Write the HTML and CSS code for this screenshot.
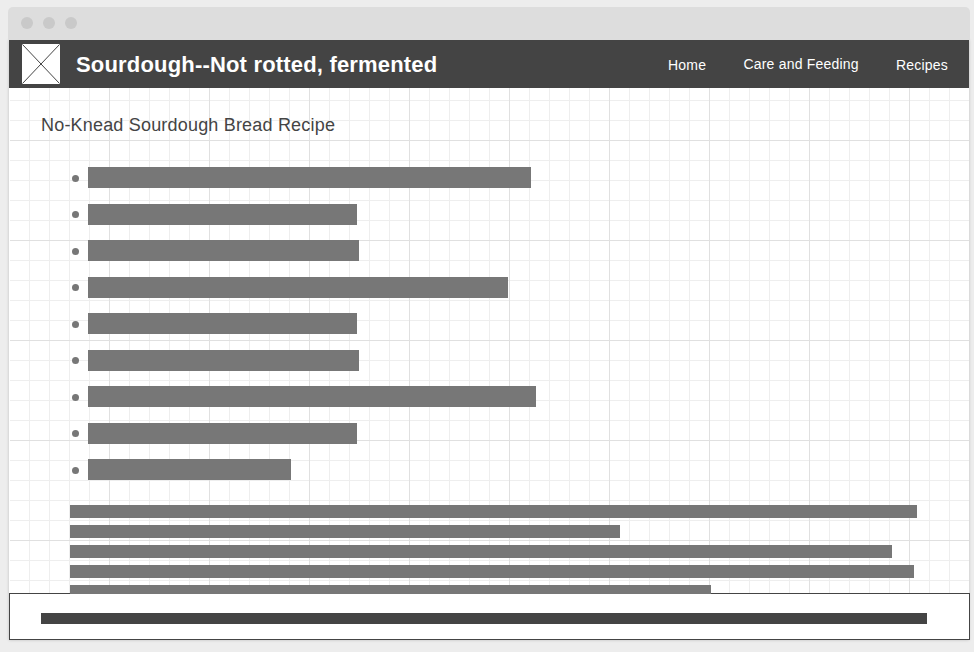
FILE: index.html
```html
<!DOCTYPE html>
<html lang="en">
<head>
<meta charset="utf-8">
<title>Sourdough</title>
<link rel="stylesheet" href="styles.css">
</head>
<body>
<div class="window">
  <div class="titlebar"><i class="dot"></i><i class="dot"></i><i class="dot"></i></div>
  <div class="page">
    <header class="header">
      <svg class="logo" width="38" height="40" viewBox="0 0 38 40"><rect width="38" height="40" rx="0.5" fill="#fff"/><path d="M0.5 0.5L37.5 39.5M37.5 0.5L0.5 39.5" stroke="#444" stroke-width="1"/></svg>
      <h1 class="brand">Sourdough--Not rotted, fermented</h1>
      <nav class="nav">
        <a class="link">Home</a>
        <a class="link link-raised">Care and Feeding</a>
        <a class="link">Recipes</a>
      </nav>
    </header>
    <main class="content">
      <h2 class="title">No-Knead Sourdough Bread Recipe</h2>
      <ul class="list">
        <li class="item"><span class="bar" style="width:443px"></span></li>
        <li class="item"><span class="bar" style="width:269px"></span></li>
        <li class="item"><span class="bar" style="width:271px"></span></li>
        <li class="item"><span class="bar" style="width:420px"></span></li>
        <li class="item"><span class="bar" style="width:269px"></span></li>
        <li class="item"><span class="bar" style="width:271px"></span></li>
        <li class="item"><span class="bar" style="width:448px"></span></li>
        <li class="item"><span class="bar" style="width:269px"></span></li>
        <li class="item"><span class="bar" style="width:203px"></span></li>
      </ul>
      <div class="paragraph">
        <div class="line" style="width:847px"></div>
        <div class="line" style="width:550px"></div>
        <div class="line" style="width:822px"></div>
        <div class="line" style="width:844px"></div>
        <div class="line" style="width:641px"></div>
      </div>
    </main>
    <footer class="footer"><div class="footer-text"></div></footer>
  </div>
</div>
</body>
</html>
```
FILE: styles.css
```css
* { box-sizing: border-box; }

body {
  margin: 0;
  height: 652px;
  padding: 7px 4px 12px 8px;
  overflow: hidden;
  background: #ededed;
  font-family: "Liberation Sans", Arial, sans-serif;
}

.window {
  width: 962px;
  height: 633px;
}

.titlebar {
  position: relative;
  z-index: 1;
  display: flex;
  gap: 10px;
  height: 33px;
  padding: 10px 13px;
  border-radius: 5px 5px 0 0;
  background: #ddd;
}

.dot {
  width: 12px;
  height: 12px;
  border-radius: 50%;
  background: #c9c9c9;
}

.page {
  width: 960px;
  height: 600px;
  margin-left: 1px;
  background: #fff;
  box-shadow: 0 0 3px rgba(0, 0, 0, 0.2);
}

.header {
  display: flex;
  align-items: center;
  height: 48px;
  padding: 0 21px 0 13px;
  background: #444;
  color: #fff;
}

.logo { display: block; }

.brand {
  margin: 1px 0 0 16px;
  font-size: 22px;
  line-height: 26px;
  letter-spacing: 0.18px;
  white-space: nowrap;
}

.nav {
  display: flex;
  gap: 37.3px;
  margin: 2px 0 0 auto;
  font-size: 14px;
  line-height: 16px;
  letter-spacing: 0.2px;
  white-space: nowrap;
}

.link-raised { margin-top: -1px; }

.content {
  position: relative;
  z-index: 1;
  height: 506px;
  margin-left: 1px;
  padding: 26px 0 0 31px;
  overflow: hidden;
}

/* Graph-paper grid: minor lines every 20px, major lines every 100px */
.content::before {
  content: "";
  position: absolute;
  inset: 0 -1px 1px 0;
  z-index: -1;
  background:
    linear-gradient(#e0e0e0 1px, transparent 1px) 0 52px / 100px 100px,
    linear-gradient(90deg, #e0e0e0 1px, transparent 1px) 99px 0 / 100px 100px,
    linear-gradient(#eee 1px, transparent 1px) 0 12px / 20px 20px,
    linear-gradient(90deg, #eee 1px, transparent 1px) 19px 0 / 20px 20px;
}

.title {
  margin: 0;
  height: 53px;
  color: #444;
  font-size: 18px;
  line-height: 22px;
  font-weight: 400;
  letter-spacing: 0.19px;
}

.list {
  margin: 0 0 0 31px;
  padding: 0;
  height: 338px;
  list-style: none;
}

.item {
  display: flex;
  gap: 9px;
  height: 36.5px;
}

.item::before {
  content: "";
  width: 7px;
  height: 7px;
  margin-top: 7.9px;
  border-radius: 50%;
  background: #777;
}

.bar {
  height: 21px;
  background: #777;
}

.paragraph {
  display: flex;
  flex-direction: column;
  gap: 7px;
  margin-left: 29px;
}

.line {
  flex: none;
  height: 13px;
  background: #777;
}

.footer {
  width: 961px;
  height: 47px;
  margin-top: -1px;
  padding: 19px 31px;
  border: 1px solid #444;
  background: #fff;
}

.footer-text {
  width: 886px;
  height: 11px;
  background: #444;
}
```
